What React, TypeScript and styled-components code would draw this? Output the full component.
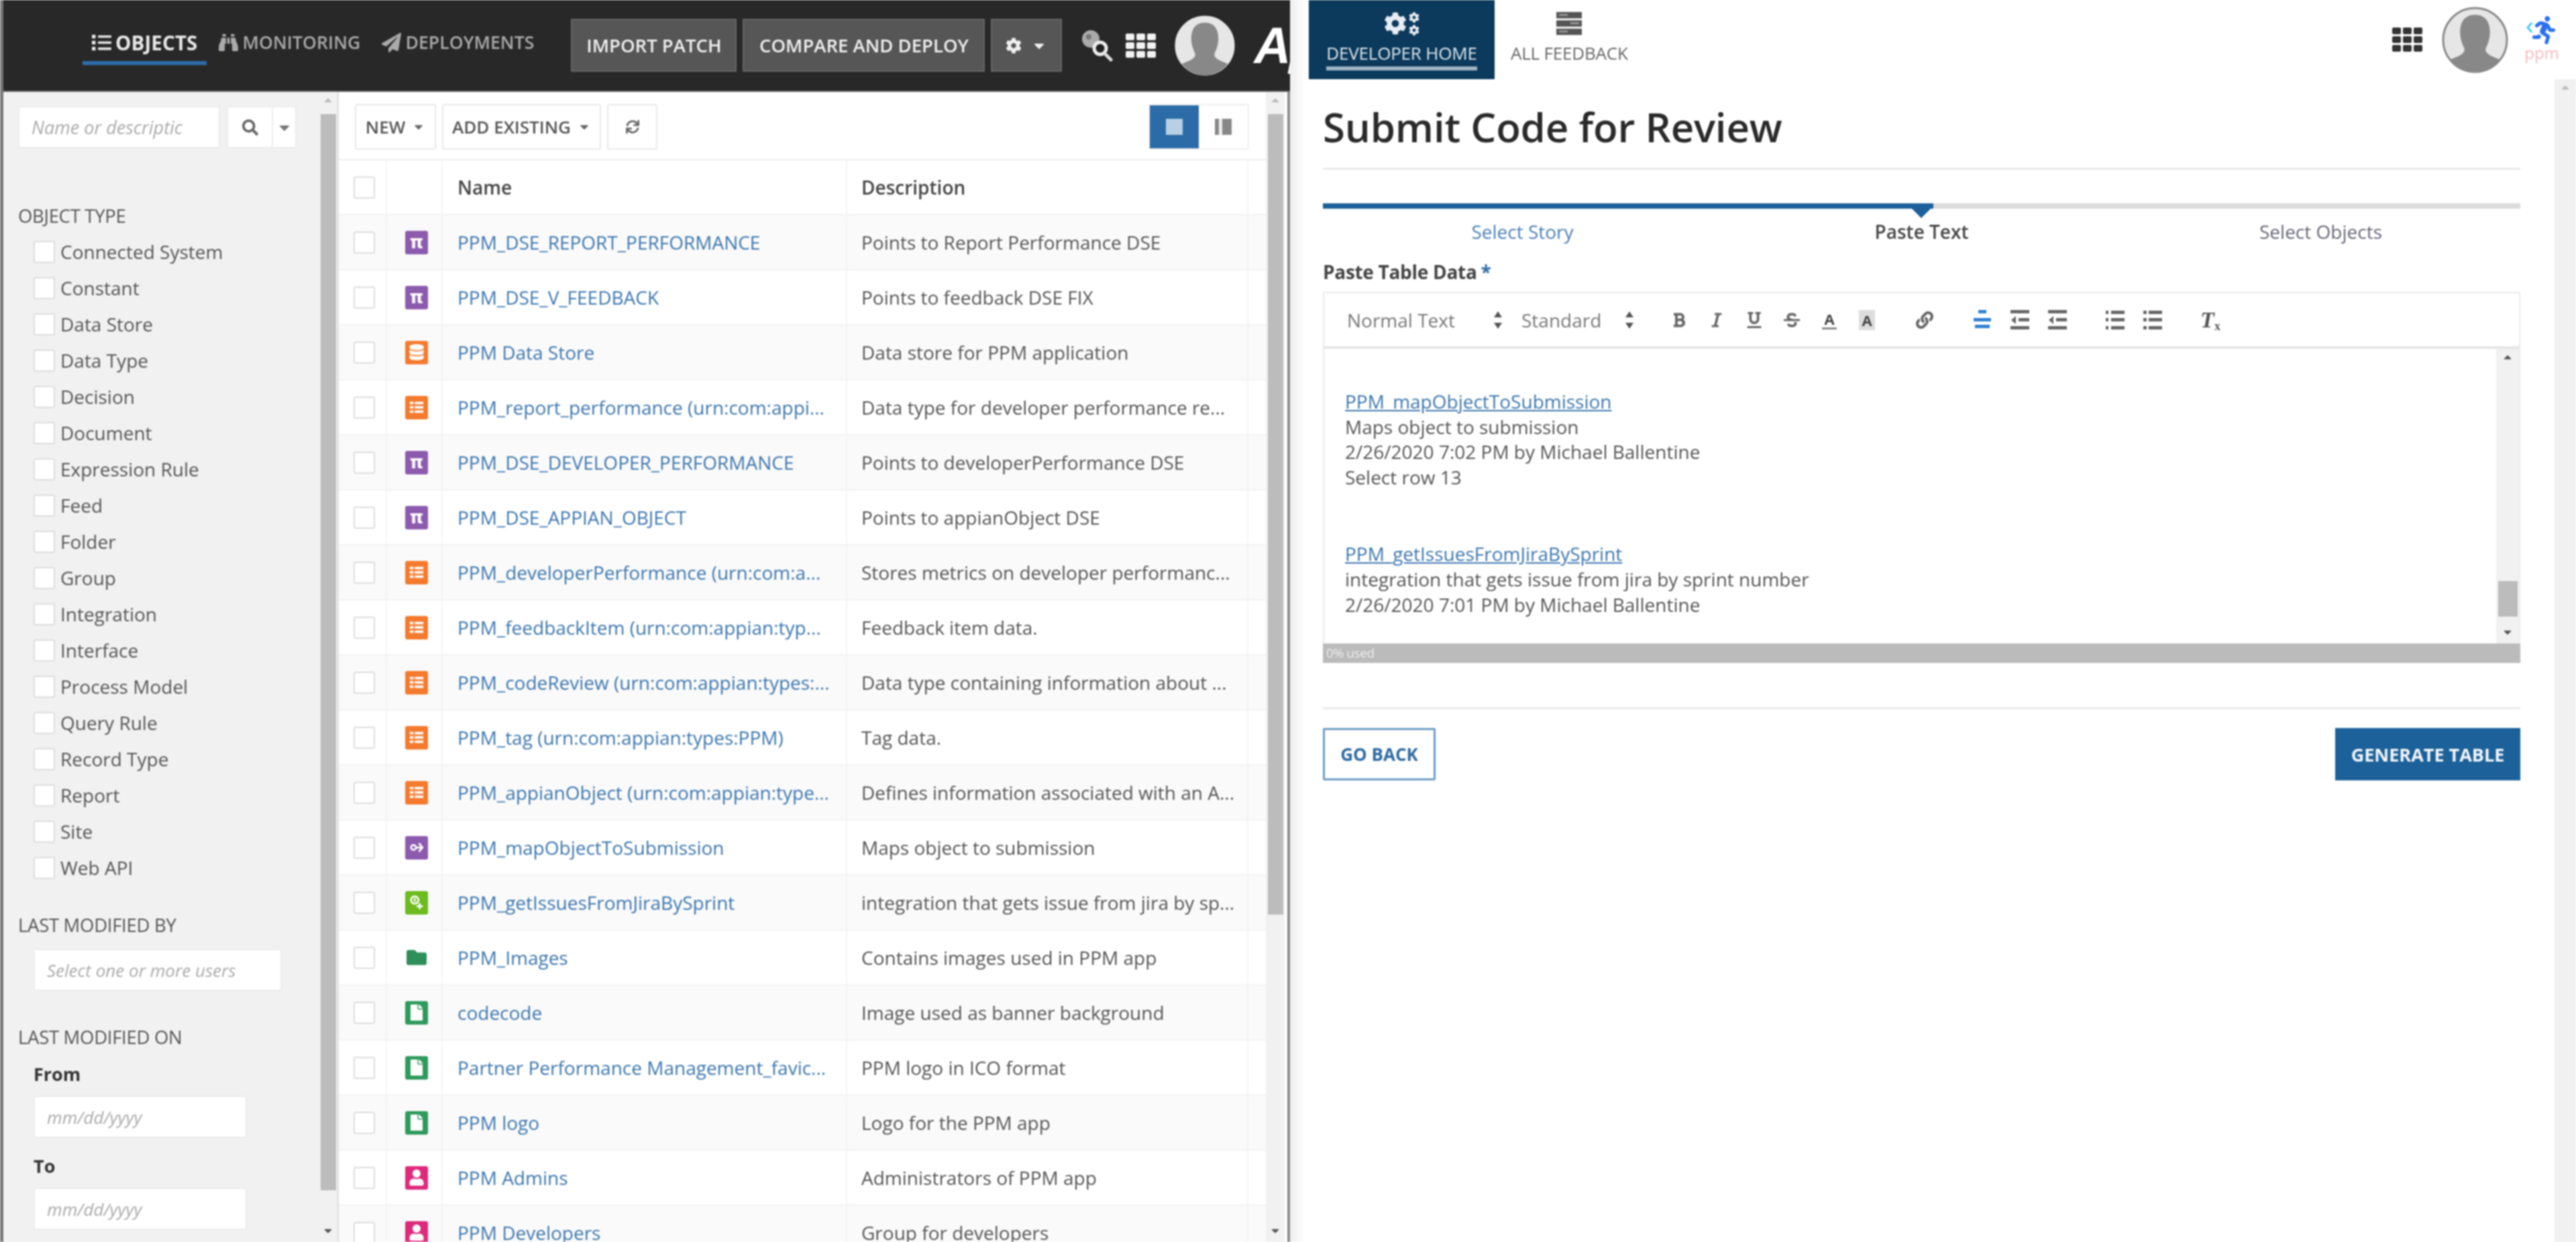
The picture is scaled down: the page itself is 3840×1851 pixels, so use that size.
import React from 'react';
import styled, { createGlobalStyle } from 'styled-components';
import { FaList, FaBinoculars, FaPaperPlane, FaCog, FaCaretDown, FaCaretUp, FaSearch, FaSync, FaBold, FaItalic, FaUnderline, FaStrikethrough, FaLink, FaFolder, FaRunning, FaUser, FaFile, FaDatabase } from 'react-icons/fa';

const Global = createGlobalStyle`
  html, body { margin: 0; padding: 0; background: #fff; }
  * { box-sizing: border-box; }
  body { font-family: "Open Sans", "Noto Sans", sans-serif; color: #555; }
`;

const Page = styled.div`
  display: flex; width: 3840px; height: 1851px; overflow: hidden; filter: blur(0.9px);
`;

const LeftWindow = styled.div`
  width: 1923px; flex: none; height: 100%; display: flex; flex-direction: column;
  border-left: 5px solid #777; overflow: hidden;
`;
const Header = styled.header`
  height: 137px; flex: none; background: #282828; display: flex; align-items: center;
  padding-left: 118px; white-space: nowrap; overflow: hidden; border-bottom: 2px solid #666;
`;
const Nav = styled.nav`display: flex; align-items: center; gap: 4px; margin-right: 41px; margin-top: -3px;`;
const Tab = styled.a<{ $active?: boolean }>`
  display: flex; align-items: center; gap: 6px; height: 62px; padding: 0 14px;
  font-size: ${p => p.$active ? 29.5 : 26.5}px; font-weight: ${p => p.$active ? 700 : 600};
  letter-spacing: 0.1px;
  color: ${p => p.$active ? '#e8e8e8' : '#aaa'};
  border-bottom: 6px solid ${p => p.$active ? '#2b6ca8' : 'transparent'};
  svg { flex: none; width: 29px; height: 29px; }
`;
const HeadButton = styled.button<{ $w: number }>`
  width: ${p => p.$w}px; height: 79px; flex: none; background: #565656; border: 2px solid #666;
  color: #f0f0f0; font: 600 27.5px "Open Sans", sans-serif; display: flex; align-items: center;
  justify-content: center; gap: 14px; padding: 0;
  & + & { margin-left: 9px; }
  svg { width: 24px; height: 24px; }
`;
const HeadIcons = styled.div`display: flex; align-items: center; margin-left: 28px; gap: 19px;`;
const HeadAvatar = styled.div`margin-left: 28px; display: flex;`;
const AppianMark = styled.span`
  display: block; flex: none; margin-left: 28px; color: #fff;
  font: italic 700 76px "Liberation Sans", sans-serif; letter-spacing: -3px;
`;

const Body = styled.div`flex: 1; min-height: 0; display: flex; border-right: 4px solid #8a8a8a;`;
const Sidebar = styled.aside`
  width: 500px; flex: none; background: #f1f1f1; border-right: 2px solid #ddd; display: flex;
`;
const Filters = styled.div`flex: 1; padding: 21px 0 0 22px; min-width: 0;`;
const SearchRow = styled.div`display: flex;`;
const TextInput = styled.input<{ $w: number }>`
  width: ${p => p.$w}px; height: 63px; background: #fff; border: 2px solid #ececec; display: block;
  padding: 0 18px; font: 26px "Open Sans", sans-serif; outline: none; border-radius: 2px;
  &::placeholder { color: #aaa; font-style: italic; opacity: 1; }
`;
const SearchInput = styled(TextInput)`padding-right: 40px; font-size: 27px;`;
const SearchBtn = styled.div`
  width: 69px; height: 63px; margin-left: 10px; background: #fff; border: 2px solid #ececec;
  display: flex; align-items: center; justify-content: center; color: #666; font-size: 24px;
`;
const CaretBtn = styled(SearchBtn)`width: 35px; margin-left: 0; border-left: 0; color: #777;`;
const FilterTitle = styled.h4<{ $mt: number }>`
  margin: ${p => p.$mt}px 0 0; font-size: 27.5px; line-height: 36px; font-weight: 400; color: #555; letter-spacing: -0.3px;
`;
const TypeList = styled.div`margin: 8px 0 0 23px;`;
const TypeRow = styled.label`display: flex; align-items: center; gap: 8px; height: 54px; font-size: 28px; color: #555;`;
const Check = styled.input.attrs({ type: 'checkbox' })`
  appearance: none; width: 32px; height: 33px; margin: 0; flex: none; background: #fff;
  border: 2px solid #ddd; border-radius: 3px;
`;
const Indented = styled.div<{ $mt: number }>`margin: ${p => p.$mt}px 0 0 23px;`;
const DateLabel = styled.div<{ $mt: number }>`
  margin: ${p => p.$mt}px 0 0 23px; font-size: 27px; line-height: 36px; font-weight: 700; color: #333;
`;

const Track = styled.div<{ $w: number }>`
  width: ${p => p.$w}px; flex: none; display: flex; flex-direction: column; align-items: center;
  background: #f1f1f1; color: #555; padding: 3px 0 8px;
  svg { flex: none; width: 18px; height: 18px; }
`;
const Thumb = styled.div<{ $h: number; $mt: number }>`
  width: calc(100% - 5px); height: ${p => p.$h}px; margin-top: ${p => p.$mt}px; background: #bcbcbc; flex: none;
`;
const TrackGap = styled.div`flex: 1;`;
const DimArrow = styled.span`display: flex; color: #bbb;`;

const Main = styled.main`flex: 1; min-width: 0; background: #fff; display: flex; padding-right: 4px;`;
const MainCol = styled.div`flex: 1; min-width: 0; display: flex; flex-direction: column;`;
const Toolbar = styled.div`
  height: 102px; flex: none; padding: 18px 25px 0 24px; display: flex; align-items: flex-start; gap: 9px;
  border-bottom: 2px solid #eee;
`;
const ToolBtn = styled.div<{ $w: number }>`
  width: ${p => p.$w}px; height: 68px; flex: none; border: 2px solid #e8e8e8; border-radius: 3px; background: #fff;
  display: flex; align-items: center; justify-content: center; gap: 10px;
  font-size: 26px; font-weight: 600; color: #555; svg { width: 20px; height: 20px; color: #666; }
`;
const Toggle = styled.div`margin-left: auto; display: flex; border: 2px solid #eee; border-radius: 3px; height: 68px;`;
const ToggleCell = styled.div<{ $on?: boolean }>`
  width: 73px; display: flex; align-items: center; justify-content: center;
  background: ${p => p.$on ? '#2b6ca8' : '#fff'};
`;
const ToggleGlyph = styled.i<{ $on?: boolean }>`
  display: block; height: 24px; width: 25px;
  background: ${p => p.$on ? '#b8cfe4' : 'linear-gradient(90deg, #888 0 6px, #eee 6px 11px, #888 11px)'};
`;
const TableRow = styled.div<{ $odd?: boolean }>`
  display: grid; grid-template-columns: 72px 83px 603px 598px 1fr; height: 82px; flex: none;
  background: ${p => p.$odd ? '#fafafa' : '#fff'}; border-bottom: 2px solid #f3f3f3;
`;
const Cell = styled.div`
  display: flex; align-items: center; min-width: 0; white-space: nowrap; overflow: hidden;
  font-size: 28px; color: #555; padding-left: 22px; border-right: 2px solid #f4f4f4;
  &:first-child { padding-left: 22px; }
  &:nth-child(2) { padding-left: 27px; }
  &:nth-child(3) { padding-left: 22px; }
  &:nth-child(4) { padding-left: 21px; }
  &:last-child { border-right: 0; }
`;
const HeadCell = styled(Cell)`font-weight: 600; color: #444;`;
const NameLink = styled.a`color: #3c76ae;`;
const Tile = styled.span<{ $c: string }>`
  width: 34px; height: 35px; border-radius: 3px; background: ${p => p.$c}; color: #fff; display: flex;
  align-items: center; justify-content: center; font: 700 26px/1 "DejaVu Sans", sans-serif; overflow: hidden;
  svg { width: 22px; height: 24px; display: block; }
`;
const Bare = styled.span<{ $c: string }>`
  display: flex; width: 34px; height: 35px; color: ${p => p.$c}; align-items: center; justify-content: center;
  svg { width: 32px; height: 30px; }
`;

const RightWindow = styled.div`
  flex: 1; min-width: 0; height: 100%; display: flex; flex-direction: column;
  background: linear-gradient(90deg, #eee, #fff 22px);
`;
const TopBar = styled.div`height: 118px; flex: none; display: flex; padding-left: 28px;`;
const NavTile = styled.a<{ $active?: boolean }>`
  display: flex; flex-direction: column; align-items: center; padding: 12px 24px 0; width: ${p => p.$active ? '277px' : 'auto'};
  background: ${p => p.$active ? '#0c3a5c' : 'transparent'}; color: ${p => p.$active ? '#dfe8ef' : '#666'};
`;
const NavTileIcon = styled.div`height: 46px; display: flex; align-items: center; gap: 3px;`;
const NavTileText = styled.span<{ $active?: boolean }>`
  margin-top: 4px; font-size: 26px; line-height: 34px; padding-bottom: 3px; white-space: nowrap; letter-spacing: -0.2px;
  border-bottom: 6px solid ${p => p.$active ? '#9fb4c5' : 'transparent'};
`;
const MiniCogs = styled.div`display: flex; flex-direction: column; gap: 3px;`;
const TopRight = styled.div`margin-left: auto; display: flex; align-items: center; padding: 0 27px 0 0;`;
const RightAvatar = styled.div`margin-left: 29px; display: flex;`;
const PpmMark = styled.div`
  margin-left: 26px; display: flex; flex-direction: column; align-items: center; width: 48px; color: #2a6ff0;
  margin-top: -6px;
`;
const PpmFigure = styled.div`
  display: flex; align-items: center; height: 46px;
  svg:first-child { margin-right: -7px; margin-top: -8px; flex: none; }
  svg:last-child { flex: none; }
`;
const PpmText = styled.span`font-size: 24px; line-height: 22px; color: #f5b9bd;`;

const RightBody = styled.div`flex: 1; min-height: 0; display: flex;`;
const Content = styled.div`flex: 1; min-width: 0; padding: 0 51px 0 49px;`;
const Title = styled.h1`margin: 31px 0 0; font-size: 60px; line-height: 80px; font-weight: 600; color: #2a2a2a; letter-spacing: -0.2px;`;
const Rule = styled.hr<{ $mt: number }>`height: 3px; border: 0; background: #e9e9e9; margin: ${p => p.$mt}px 0 0;`;
const StepBar = styled.div`height: 8px; margin-top: 50px; background: #dcdcdc; position: relative;`;
const StepFill = styled.div`
  height: 100%; background: #1c6199; position: relative;
  &::after { content: ''; position: absolute; right: 0; top: 4px; border: 18px solid transparent; border-top: 18px solid #1c6199; border-bottom: 0; }
`;
const StepLabels = styled.div`display: grid; grid-template-columns: repeat(3, 1fr); margin-top: 16px; text-align: center;`;
const StepLabel = styled.div<{ $state: 'done' | 'now' | 'next' }>`
  font-size: 28px; line-height: 36px;
  color: ${p => p.$state === 'done' ? '#4a7fb5' : p.$state === 'now' ? '#444' : '#667'};
  font-weight: ${p => p.$state === 'now' ? 600 : 400};
`;
const FieldLabel = styled.div`margin-top: 27px; font-size: 28px; line-height: 30px; font-weight: 700; color: #444; letter-spacing: -0.3px;`;
const Req = styled.span`color: #2b6ca8; margin-left: 6px;`;
const Editor = styled.div`margin-top: 15px; border: 2px solid #ebebeb; border-bottom: 0;`;
const EditBar = styled.div`height: 83px; display: flex; align-items: center; padding-left: 34px; border-bottom: 4px solid #e6e6e6;`;
const EditSelect = styled.div<{ $w: number; $mr: number }>`
  width: ${p => p.$w}px; margin-right: ${p => p.$mr}px; flex: none; display: flex; align-items: center; justify-content: space-between;
  font-size: 28px; color: #777;
`;
const EditGroup = styled.div`display: flex; margin-right: 30px;`;
const EditIcon = styled.span<{ $active?: boolean }>`
  width: 56px; height: 40px; display: flex; align-items: center; justify-content: center;
  color: ${p => p.$active ? '#2d7fd3' : '#666'}; svg { display: block; }
`;
const ColorLetter = styled.span`
  font: 700 22px/26px "Open Sans", sans-serif; border-bottom: 3px solid #888; padding: 0 3px; color: #444;
`;
const HatchLetter = styled.span`
  font: 700 22px/30px "Open Sans", sans-serif; padding: 0 4px; color: #444; background: #ddd;
`;
const ClearMark = styled.span`font: italic 700 34px/34px "Liberation Serif", serif; color: #555;`;
const ClearSub = styled.sub`font-size: 18px; font-style: normal; vertical-align: -4px; line-height: 0;`;
const EditArea = styled.div`height: 439px; display: flex;`;
const EditText = styled.div`flex: 1; min-width: 0; padding: 60px 0 0 31px; font-size: 28px; line-height: 37.6px; color: #555;`;
const EntryLink = styled.a`display: block; color: #3c76ae; text-decoration: underline;`;
const EntryLine = styled.div``;
const EntryGap = styled.div`height: 77px;`;
const Counter = styled.div`height: 29px; margin: 0 -2px; background: #bbb; color: #eee; font-size: 19px; line-height: 28px; padding-left: 5px; letter-spacing: -0.4px;`;
const Actions = styled.div`margin-top: 28px; display: flex; justify-content: space-between;`;
const GhostBtn = styled.button`
  width: 168px; height: 78px; background: #fff; border: 3px solid #6c9cc5; color: #2f6aa2; border-radius: 2px;
  font: 700 26px "Open Sans", sans-serif; padding: 0;
`;
const SolidBtn = styled.button`
  width: 276px; height: 78px; background: #1c6199; border: 0; color: #f2f6fa;
  font: 700 27px "Open Sans", sans-serif; padding: 0;
`;

const Avatar = ({ size, ring }: { size: number; ring?: string }) => (
  <svg width={size} height={size} viewBox="0 0 100 100">
    <circle cx="50" cy="50" r="48" fill="#e6e6e6" stroke={ring ?? '#e6e6e6'} strokeWidth="3" />
    <path d="M50 12C30 12 26 30 28 45C30 58 35 62 34 66C33 72 22 76 12 80A47 47 0 0 0 88 80C78 76 67 72 66 66C65 62 70 58 72 45C74 30 70 12 50 12Z" fill="#888" />
  </svg>
);
const Waffle = ({ c }: { c: string }) => (
  <svg width="45" height="36" viewBox="0 0 45 36" fill={c}>
    {[0, 13, 26].map(y => [0, 16, 32].map(x => <rect key={`${x}-${y}`} x={x} y={y} width="13" height="10" rx="2" />))}
  </svg>
);
const GearSearch = () => (
  <svg width="48" height="50" viewBox="0 0 48 50">
    <circle cx="15" cy="15" r="13" fill="#aaa" />
    <circle cx="12" cy="12" r="4" fill="#777" />
    <circle cx="29" cy="29" r="9" fill="#222" stroke="#eee" strokeWidth="5" />
    <path d="M36 37l9 9" stroke="#ddd" strokeWidth="5" strokeLinecap="round" />
  </svg>
);
const ServerIcon = () => (
  <svg width="38" height="36" viewBox="0 0 40 36" fill="#555">
    <rect y="0" width="40" height="10" /><rect y="13" width="40" height="10" /><rect y="26" width="40" height="10" />
    <rect x="4" y="3" width="14" height="3" fill="#999" /><rect x="22" y="16" width="14" height="3" fill="#999" /><rect x="4" y="29" width="14" height="3" fill="#999" />
  </svg>
);
const RunnerTrail = () => (
  <svg width="12" height="16" viewBox="0 0 12 16" fill="none" stroke="#3fd0f0" strokeWidth="3"><path d="M8 1L2 8l6 7" /></svg>
);
const SortIcon = () => (
  <svg width="14" height="26" viewBox="0 0 14 26" fill="#555"><path d="M7 0l6 9H1zM7 26l6-9H1z" /></svg>
);
const Bars = ({ rows }: { rows: [number, number, number][] }) => (
  <svg width="30" height="30" viewBox="0 0 30 30" fill="currentColor">
    {rows.map(([x, y, w], i) => <rect key={i} x={x} y={y} width={w} height="5" />)}
  </svg>
);
const CenterAlign = () => <Bars rows={[[9, 0, 12], [2, 12, 26], [4, 22, 22]]} />;
const Outdent = () => (
  <svg width="30" height="30" viewBox="0 0 30 30" fill="currentColor"><rect x="1" width="28" height="5" /><rect x="13" y="12" width="16" height="5" /><rect x="1" y="24" width="28" height="5" /><path d="M9 9v12l-7-6z" /></svg>
);
const Ordered = () => <Bars rows={[[1, 1, 4], [9, 1, 20], [1, 12, 4], [9, 12, 20], [1, 24, 4], [9, 24, 20]]} />;
const Bullet = () => <Bars rows={[[1, 1, 5], [9, 1, 20], [1, 12, 5], [9, 12, 20], [1, 24, 5], [9, 24, 20]]} />;

const tableGlyph = (
  <svg viewBox="0 0 24 24" fill="#fff"><rect x="1" y="3" width="6" height="4" /><rect x="9" y="3" width="14" height="4" /><rect x="1" y="10" width="6" height="4" /><rect x="9" y="10" width="14" height="4" /><rect x="1" y="17" width="6" height="4" /><rect x="9" y="17" width="14" height="4" /></svg>
);
const mapGlyph = (
  <svg viewBox="0 0 24 24" fill="none" stroke="#fff" strokeWidth="3"><circle cx="7" cy="12" r="4" /><path d="M11 12h12" /><path d="M16 5l5 7-5 7" /></svg>
);
const integrationGlyph = (
  <svg viewBox="0 0 24 24" fill="none" stroke="#fff" strokeWidth="3"><circle cx="9" cy="8" r="6" /><path d="M9 5v6M17 13v10M12 18h10" /></svg>
);

type Kind = 'pi' | 'store' | 'type' | 'map' | 'int' | 'folder' | 'doc' | 'group';
const TypeIcon = ({ kind }: { kind: Kind }) => {
  switch (kind) {
    case 'pi': return <Tile $c="#8c5bae">π</Tile>;
    case 'store': return <Tile $c="#f47a2e"><FaDatabase /></Tile>;
    case 'type': return <Tile $c="#f47a2e">{tableGlyph}</Tile>;
    case 'map': return <Tile $c="#8c5bae">{mapGlyph}</Tile>;
    case 'int': return <Tile $c="#6dbb1e">{integrationGlyph}</Tile>;
    case 'folder': return <Bare $c="#2f8f58"><FaFolder /></Bare>;
    case 'doc': return <Tile $c="#2f9a5c"><FaFile /></Tile>;
    default: return <Tile $c="#dd2a7b"><FaUser /></Tile>;
  }
};

const objectTypes = ['Connected System', 'Constant', 'Data Store', 'Data Type', 'Decision', 'Document', 'Expression Rule', 'Feed', 'Folder', 'Group', 'Integration', 'Interface', 'Process Model', 'Query Rule', 'Record Type', 'Report', 'Site', 'Web API'];

const rows: [Kind, string, string][] = [
  ['pi', 'PPM_DSE_REPORT_PERFORMANCE', 'Points to Report Performance DSE'],
  ['pi', 'PPM_DSE_V_FEEDBACK', 'Points to feedback DSE FIX'],
  ['store', 'PPM Data Store', 'Data store for PPM application'],
  ['type', 'PPM_report_performance (urn:com:appi...', 'Data type for developer performance re...'],
  ['pi', 'PPM_DSE_DEVELOPER_PERFORMANCE', 'Points to developerPerformance DSE'],
  ['pi', 'PPM_DSE_APPIAN_OBJECT', 'Points to appianObject DSE'],
  ['type', 'PPM_developerPerformance (urn:com:a...', 'Stores metrics on developer performanc...'],
  ['type', 'PPM_feedbackItem (urn:com:appian:typ...', 'Feedback item data.'],
  ['type', 'PPM_codeReview (urn:com:appian:types:...', 'Data type containing information about ...'],
  ['type', 'PPM_tag (urn:com:appian:types:PPM)', 'Tag data.'],
  ['type', 'PPM_appianObject (urn:com:appian:type...', 'Defines information associated with an A...'],
  ['map', 'PPM_mapObjectToSubmission', 'Maps object to submission'],
  ['int', 'PPM_getIssuesFromJiraBySprint', 'integration that gets issue from jira by sp...'],
  ['folder', 'PPM_Images', 'Contains images used in PPM app'],
  ['doc', 'codecode', 'Image used as banner background'],
  ['doc', 'Partner Performance Management_favic...', 'PPM logo in ICO format'],
  ['doc', 'PPM logo', 'Logo for the PPM app'],
  ['group', 'PPM Admins', 'Administrators of PPM app'],
  ['group', 'PPM Developers', 'Group for developers'],
];

export default function App() {
  return (
    <>
      <Global />
      <Page>
        <LeftWindow>
          <Header>
            <Nav>
              <Tab $active><FaList />OBJECTS</Tab>
              <Tab><FaBinoculars />MONITORING</Tab>
              <Tab><FaPaperPlane />DEPLOYMENTS</Tab>
            </Nav>
            <HeadButton $w={247}>IMPORT PATCH</HeadButton>
            <HeadButton $w={361}>COMPARE AND DEPLOY</HeadButton>
            <HeadButton $w={106}><FaCog /><FaCaretDown /></HeadButton>
            <HeadIcons><GearSearch /><Waffle c="#f2f2f2" /></HeadIcons>
            <HeadAvatar><Avatar size={90} /></HeadAvatar>
            <AppianMark>Ap</AppianMark>
          </Header>
          <Body>
            <Sidebar>
              <Filters>
                <SearchRow>
                  <SearchInput $w={301} placeholder="Name or descriptic" />
                  <SearchBtn><FaSearch /></SearchBtn>
                  <CaretBtn><FaCaretDown /></CaretBtn>
                </SearchRow>
                <FilterTitle $mt={83}>OBJECT TYPE</FilterTitle>
                <TypeList>
                  {objectTypes.map(t => <TypeRow key={t}><Check />{t}</TypeRow>)}
                </TypeList>
                <FilterTitle $mt={41}>LAST MODIFIED BY</FilterTitle>
                <Indented $mt={17}><TextInput $w={370} placeholder="Select one or more users" /></Indented>
                <FilterTitle $mt={51}>LAST MODIFIED ON</FilterTitle>
                <DateLabel $mt={19}>From</DateLabel>
                <Indented $mt={14}><TextInput $w={318} placeholder="mm/dd/yyyy" /></Indented>
                <DateLabel $mt={24}>To</DateLabel>
                <Indented $mt={14}><TextInput $w={318} placeholder="mm/dd/yyyy" /></Indented>
              </Filters>
              <Track $w={28}>
                <DimArrow><FaCaretUp /></DimArrow>
                <Thumb $h={1604} $mt={12} />
                <TrackGap />
                <FaCaretDown />
              </Track>
            </Sidebar>
            <Main>
              <MainCol>
                <Toolbar>
                  <ToolBtn $w={121}>NEW <FaCaretDown /></ToolBtn>
                  <ToolBtn $w={237}>ADD EXISTING <FaCaretDown /></ToolBtn>
                  <ToolBtn $w={75}><FaSync /></ToolBtn>
                  <Toggle>
                    <ToggleCell $on><ToggleGlyph $on /></ToggleCell>
                    <ToggleCell><ToggleGlyph /></ToggleCell>
                  </Toggle>
                </Toolbar>
                <TableRow>
                  <Cell><Check /></Cell>
                  <HeadCell />
                  <HeadCell>Name</HeadCell>
                  <HeadCell>Description</HeadCell>
                  <Cell />
                </TableRow>
                {rows.map(([kind, name, desc], i) => (
                  <TableRow key={name} $odd={i % 2 === 0}>
                    <Cell><Check /></Cell>
                    <Cell><TypeIcon kind={kind} /></Cell>
                    <Cell><NameLink>{name}</NameLink></Cell>
                    <Cell>{desc}</Cell>
                    <Cell />
                  </TableRow>
                ))}
              </MainCol>
              <Track $w={28}>
                <DimArrow><FaCaretUp /></DimArrow>
                <Thumb $h={1193} $mt={12} />
                <TrackGap />
                <FaCaretDown />
              </Track>
            </Main>
          </Body>
        </LeftWindow>
        <RightWindow>
          <TopBar>
            <NavTile $active>
              <NavTileIcon><FaCog size={34} color="#e8eef3" /><MiniCogs><FaCog size={16} color="#e8eef3" /><FaCog size={16} color="#e8eef3" /></MiniCogs></NavTileIcon>
              <NavTileText $active>DEVELOPER HOME</NavTileText>
            </NavTile>
            <NavTile>
              <NavTileIcon><ServerIcon /></NavTileIcon>
              <NavTileText>ALL FEEDBACK</NavTileText>
            </NavTile>
            <TopRight>
              <Waffle c="#333" />
              <RightAvatar><Avatar size={99} ring="#888" /></RightAvatar>
              <PpmMark>
                <PpmFigure><RunnerTrail /><FaRunning size={42} /></PpmFigure>
                <PpmText>ppm</PpmText>
              </PpmMark>
            </TopRight>
          </TopBar>
          <RightBody>
            <Content>
              <Title>Submit Code for Review</Title>
              <Rule $mt={21} />
              <StepBar><StepFill style={{ width: `${(910 / 1785) * 100}%` }} /></StepBar>
              <StepLabels>
                <StepLabel $state="done">Select Story</StepLabel>
                <StepLabel $state="now">Paste Text</StepLabel>
                <StepLabel $state="next">Select Objects</StepLabel>
              </StepLabels>
              <FieldLabel>Paste Table Data<Req>*</Req></FieldLabel>
              <Editor>
                <EditBar>
                  <EditSelect $w={232} $mr={28}>Normal Text<SortIcon /></EditSelect>
                  <EditSelect $w={168} $mr={39}>Standard<SortIcon /></EditSelect>
                  <EditGroup>
                    <EditIcon><FaBold size={24} /></EditIcon>
                    <EditIcon><FaItalic size={24} /></EditIcon>
                    <EditIcon><FaUnderline size={24} /></EditIcon>
                    <EditIcon><FaStrikethrough size={24} /></EditIcon>
                    <EditIcon><ColorLetter>A</ColorLetter></EditIcon>
                    <EditIcon><HatchLetter>A</HatchLetter></EditIcon>
                  </EditGroup>
                  <EditGroup><EditIcon><FaLink size={26} /></EditIcon></EditGroup>
                  <EditGroup>
                    <EditIcon $active><CenterAlign /></EditIcon>
                    <EditIcon><Outdent /></EditIcon>
                    <EditIcon><Outdent /></EditIcon>
                  </EditGroup>
                  <EditGroup>
                    <EditIcon><Ordered /></EditIcon>
                    <EditIcon><Bullet /></EditIcon>
                  </EditGroup>
                  <EditGroup><EditIcon><ClearMark>T<ClearSub>x</ClearSub></ClearMark></EditIcon></EditGroup>
                </EditBar>
                <EditArea>
                  <EditText>
                    <EntryLink>PPM_mapObjectToSubmission</EntryLink>
                    <EntryLine>Maps object to submission</EntryLine>
                    <EntryLine>2/26/2020 7:02 PM by Michael Ballentine</EntryLine>
                    <EntryLine>Select row 13</EntryLine>
                    <EntryGap />
                    <EntryLink>PPM_getIssuesFromJiraBySprint</EntryLink>
                    <EntryLine>integration that gets issue from jira by sprint number</EntryLine>
                    <EntryLine>2/26/2020 7:01 PM by Michael Ballentine</EntryLine>
                  </EditText>
                  <Track $w={34}>
                    <FaCaretUp />
                    <Thumb $h={53} $mt={325} />
                    <TrackGap />
                    <FaCaretDown />
                  </Track>
                </EditArea>
                <Counter>0% used</Counter>
              </Editor>
              <Rule $mt={66} />
              <Actions>
                <GhostBtn>GO BACK</GhostBtn>
                <SolidBtn>GENERATE TABLE</SolidBtn>
              </Actions>
            </Content>
            <Track $w={32}><DimArrow><FaCaretUp /></DimArrow></Track>
          </RightBody>
        </RightWindow>
      </Page>
    </>
  );
}
